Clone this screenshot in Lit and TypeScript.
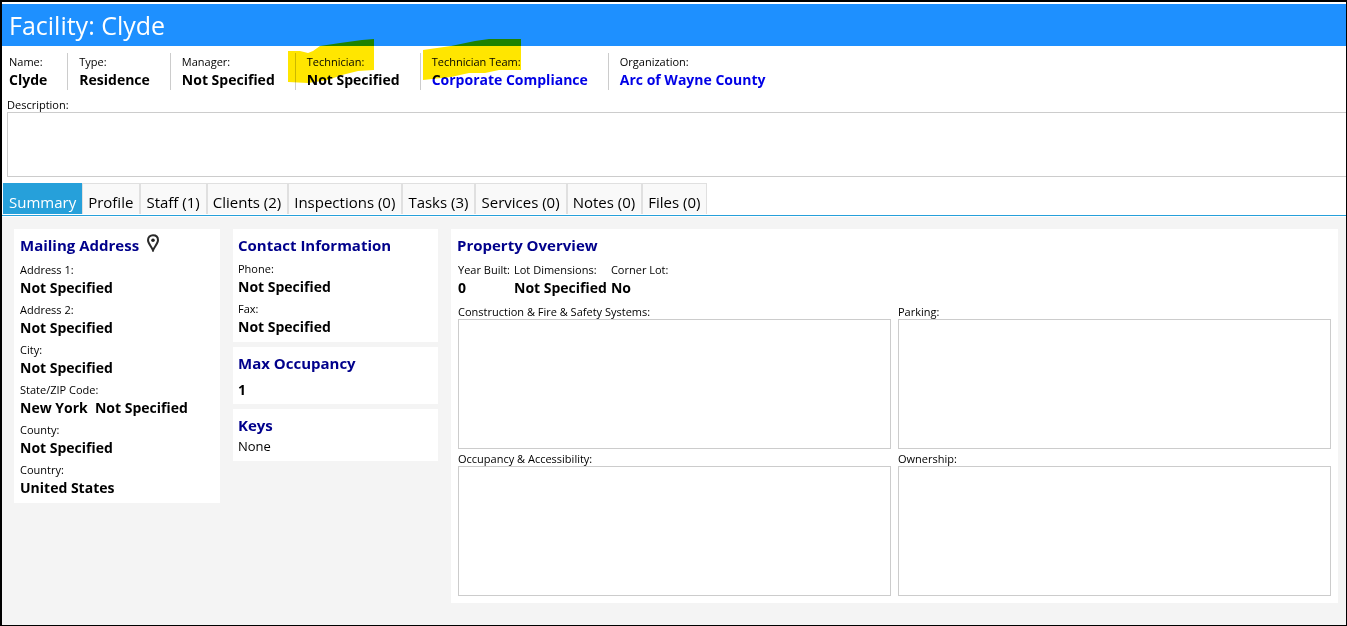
import { LitElement, html, css, nothing } from "lit";
import { customElement, property, state } from "lit/decorators.js";

interface Field {
  label: string;
  value: string;
  link?: boolean;
  mark?: string;
}

const HEADER_FIELDS: Field[] = [
  { label: "Name:", value: "Clyde" },
  { label: "Type:", value: "Residence" },
  { label: "Manager:", value: "Not Specified" },
  {
    label: "Technician:",
    value: "Not Specified",
    mark: "M0 12L12 12L20 14L25 12L32 7L52 4L74 1L86 0L86 31L70 32L54 36L40 41L20 44L0 43Z",
  },
  {
    label: "Technician Team:",
    value: "Corporate Compliance",
    link: true,
    mark: "M0 11L28 7L52 2L66 0L98 0L98 31L76 31L62 34L46 34L28 38L0 41Z",
  },
  { label: "Organization:", value: "Arc of Wayne County", link: true },
];

const TABS = [
  "Summary",
  "Profile",
  "Staff (1)",
  "Clients (2)",
  "Inspections (0)",
  "Tasks (3)",
  "Services (0)",
  "Notes (0)",
  "Files (0)",
];

const MAILING: Field[] = [
  { label: "Address 1:", value: "Not Specified" },
  { label: "Address 2:", value: "Not Specified" },
  { label: "City:", value: "Not Specified" },
  { label: "State/ZIP Code:", value: "New York\u00a0 Not Specified" },
  { label: "County:", value: "Not Specified" },
  { label: "Country:", value: "United States" },
];

const CONTACT: Field[] = [
  { label: "Phone:", value: "Not Specified" },
  { label: "Fax:", value: "Not Specified" },
];

const LOT: Field[] = [
  { label: "Year Built:", value: "0" },
  { label: "Lot Dimensions:", value: "Not Specified" },
  { label: "Corner Lot:", value: "No" },
];

const NOTES = [
  { id: "construction", label: "Construction & Fire & Safety Systems:" },
  { id: "parking", label: "Parking:" },
  { id: "occupancy", label: "Occupancy & Accessibility:" },
  { id: "ownership", label: "Ownership:" },
];

@customElement("facility-field")
class FacilityField extends LitElement {
  @property({ attribute: false }) field!: Field;

  static styles = css`
    :host {
      display: block;
      white-space: nowrap;
    }
    .label {
      font-size: 11px;
      line-height: 16px;
    }
    .value {
      font-size: 14px;
      line-height: 20px;
      font-weight: 700;
    }
    .link {
      color: #0000e6;
      text-decoration: none;
    }
  `;

  render() {
    const { label, value, link } = this.field;
    return html`
      <div class="label">${label}</div>
      <div class="value">${link ? html`<a class="link" href="#">${value}</a>` : value}</div>
    `;
  }
}

@customElement("app-root")
class AppRoot extends LitElement {
  @state() private active = "Summary";

  static styles = css`
    :host {
      display: flex;
      flex-direction: column;
      box-sizing: border-box;
      min-height: 100vh;
      border: 2px solid #000;
      border-right: 1px solid #000;
      border-bottom: 1px solid #000;
      background: #fff;
      color: #000;
      font-family: "Open Sans", "Noto Sans", sans-serif;
      padding-top: 2px;
      overflow: hidden;
    }
    .title {
      margin: 0;
      padding: 1px 7px;
      background: #1e90ff;
      color: #fff;
      font-size: 25px;
      line-height: 40px;
      font-weight: 400;
    }
    .facts {
      display: flex;
      padding: 7px 7px 0;
    }
    .fact {
      position: relative;
      padding: 1px 20px 0 11px;
      border-left: 1px solid #ccc;
    }
    .fact:first-child {
      padding-left: 0;
      border-left: 0;
    }
    .mark {
      position: absolute;
      top: -14px;
      left: -8px;
      mix-blend-mode: multiply;
      pointer-events: none;
    }
    .mark-team {
      left: 2px;
    }
    .description {
      display: flex;
      flex-direction: column;
      padding: 7px 0 6px 5px;
    }
    .caption {
      font-size: 11px;
      line-height: 15px;
    }
    .box {
      display: block;
      box-sizing: border-box;
      width: 100%;
      height: 130px;
      margin: 0;
      padding: 4px;
      border: 1px solid #ccc;
      background: #fff;
      font: inherit;
      resize: none;
      outline: none;
    }
    .description-box {
      height: 65px;
      border-right: 0;
    }
    .tabs {
      display: flex;
      padding: 0 1px;
      border-bottom: 1px solid #26a0da;
    }
    .tab {
      height: 31px;
      margin: 0 0 1px;
      padding: 5px 6px 0 5px;
      border: 1px solid #e0e0e0;
      border-bottom: 0;
      background: #f9f9f9;
      color: #000;
      font-family: inherit;
      font-size: 15px;
      line-height: 24px;
      white-space: nowrap;
    }
    .selected {
      border-color: #26a0da;
      background: #26a0da;
      color: #fff;
      padding-right: 5px;
    }
    .content {
      flex: 1;
      display: grid;
      grid-template-columns: 206px 205px minmax(0, 1fr);
      gap: 13px;
      align-items: start;
      margin-top: 1px;
      padding: 12px 8px 12px 12px;
      background: #f4f4f4;
    }
    .stack {
      display: grid;
      gap: 5px;
    }
    .panel {
      background: #fff;
      padding: 4px 6px;
    }
    .stack .panel {
      padding-left: 5px;
    }
    .heading {
      display: flex;
      margin: 0;
      gap: 7px;
      color: #00008b;
      font-size: 15px;
      line-height: 24px;
      font-weight: 700;
    }
    .pin {
      display: block;
      width: 14px;
      height: 18px;
      margin-top: 1px;
      padding: 0;
      border: 0;
      background: none;
    }
    .fields {
      display: grid;
      gap: 4px;
      padding: 4px 0 1px;
    }
    .mailing {
      padding-top: 5px;
    }
    .count {
      font-size: 14px;
      line-height: 20px;
      font-weight: 700;
      padding-top: 5px;
    }
    .plain {
      font-size: 13px;
      line-height: 18px;
      padding-bottom: 2px;
    }
    .lot {
      display: flex;
      gap: 4px;
      padding: 5px 1px 6px;
    }
    .notes {
      display: grid;
      grid-template-columns: repeat(2, minmax(0, 1fr));
      gap: 2px 7px;
      padding: 0 1px 3px;
    }
    .note {
      display: flex;
      flex-direction: column;
    }
  `;

  private fields(list: Field[]) {
    return list.map((f) => html`<facility-field .field=${f}></facility-field>`);
  }

  private mark(f: Field) {
    return f.mark
      ? html`<svg class="mark ${f.link ? "mark-team" : ""}" width="98" height="44" aria-hidden="true">
          <path fill="#ffe600" d=${f.mark} />
        </svg>`
      : nothing;
  }

  render() {
    return html`
      <h1 class="title">Facility: Clyde</h1>
      <div class="facts">
        ${HEADER_FIELDS.map(
          (f) => html`<div class="fact">
            <facility-field .field=${f}></facility-field>
            ${this.mark(f)}
          </div>`
        )}
      </div>
      <div class="description">
        <label class="caption" for="description">Description:</label>
        <textarea class="box description-box" id="description" readonly></textarea>
      </div>
      <div class="tabs" role="tablist">
        ${TABS.map(
          (t) => html`<button
            class="tab ${t === this.active ? "selected" : ""}"
            role="tab"
            aria-selected=${t === this.active}
            @click=${() => (this.active = t)}
          >${t}</button>`
        )}
      </div>
      <main class="content">
        <section class="panel">
          <h2 class="heading">
            Mailing Address
            <button class="pin" aria-label="Show on map">
              <svg width="14" height="18" viewBox="0 0 14 18" fill="none">
                <path d="M7 16.300C5.800 13 2 9.500 2 6.200C2 3 4.200 1.300 7 1.300S12 3 12 6.200C12 9.500 8.200 13 7 16.300Z" stroke="#2a2a2a" stroke-width="2" />
                <circle cx="7" cy="6.200" r="1.800" fill="#222" />
              </svg>
            </button>
          </h2>
          <div class="fields mailing">${this.fields(MAILING)}</div>
        </section>
        <div class="stack">
          <section class="panel">
            <h2 class="heading">Contact Information</h2>
            <div class="fields">${this.fields(CONTACT)}</div>
          </section>
          <section class="panel">
            <h2 class="heading">Max Occupancy</h2>
            <div class="count">1</div>
          </section>
          <section class="panel">
            <h2 class="heading">Keys</h2>
            <div class="plain">None</div>
          </section>
        </div>
        <section class="panel">
          <h2 class="heading">Property Overview</h2>
          <div class="lot">${this.fields(LOT)}</div>
          <div class="notes">
            ${NOTES.map(
              (n) => html`<div class="note">
                <label class="caption" for=${n.id}>${n.label}</label>
                <textarea class="box" id=${n.id} readonly></textarea>
              </div>`
            )}
          </div>
        </section>
      </main>
    `;
  }
}
